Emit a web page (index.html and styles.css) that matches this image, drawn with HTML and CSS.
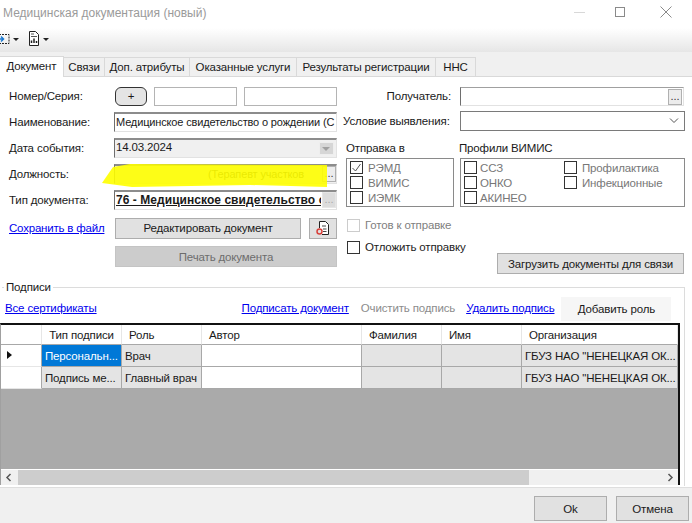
FILE: index.html
```html
<!DOCTYPE html>
<html lang="ru">
<head>
    <meta charset="UTF-8">
    <title>Медицинская документация (новый)</title>
    <link rel="stylesheet" href="styles.css">
</head>
<body>
    <div class="titlebar">
        <span class="title">Медицинская документация (новый)</span>
        <div class="win-btns">
            <span class="win-min"></span>
            <span class="win-max"></span>
            <svg class="win-close" width="12" height="12" viewBox="0 0 12 12"><path d="M.5.5l11 11M11.500.5l-11 11" stroke="#8a8a8a" fill="none"/></svg>
        </div>
    </div>

    <div class="toolbar">
        <svg class="tool-icon tool-first" width="12" height="14" viewBox="0 0 12 14"><path d="M1 2.500h10v9H1" fill="none" stroke="#222" stroke-dasharray="2 1"/><path d="M0 7h5M3 4.500L5.500 7 3 9.500" fill="none" stroke="#1a78d0" stroke-width="1.500"/></svg>
        <span class="caret"></span>
        <svg class="tool-icon" width="12" height="15" viewBox="0 0 12 15"><path d="M1.500.5h6l3 3v11h-9z" fill="#fff" stroke="#222"/><path d="M3 3h3M3 5.500h6" stroke="#555"/><path d="M3.500 12V9.500M6 12V7.500M8.500 12V10" stroke="#222" stroke-width="1.500"/></svg>
        <span class="caret"></span>
    </div>

    <div class="tabs">
        <span class="tab active">Документ</span>
        <span class="tab tab-2">Связи</span>
        <span class="tab tab-3">Доп. атрибуты</span>
        <span class="tab tab-4">Оказанные услуги</span>
        <span class="tab tab-5">Результаты регистрации</span>
        <span class="tab tab-6">ННС</span>
    </div>

    <div class="form">
        <div class="col-left">
            <div class="row">
                <label>Номер/Серия:</label>
                <button class="plus">+</button>
                <span class="input num-1"></span>
                <span class="input num-2"></span>
            </div>
            <div class="row">
                <label>Наименование:</label>
                <span class="input field sunken">Медицинское свидетельство о рождении (С</span>
            </div>
            <div class="row">
                <label>Дата события:</label>
                <span class="input field sunken gray date">14.03.2024<span class="date-btn"><i></i></span></span>
            </div>
            <div class="row">
                <label>Должность:</label>
                <span class="input field sunken gray post">(Терапевт участков<span class="dots">...</span></span>
                <svg class="marker" width="226" height="24" viewBox="0 0 226 24"><path d="M11 3L28 0l197 1v22l-77-2-118 2L0 19z" fill="#ffff00"/></svg>
            </div>
            <div class="row">
                <label>Тип документа:</label>
                <span class="input field sunken bold"><u class="clip">76 - Медицинское свидетельство о</u><span class="dots off">...</span></span>
            </div>
            <div class="row row-edit">
                <a class="link save-link">Сохранить в файл</a>
                <button class="btn edit-btn">Редактировать документ</button>
                <button class="btn icon-btn">
                    <svg width="16" height="16" viewBox="0 0 16 16"><path d="M4.500 8V1.500h6l3 3v10H7" fill="#fff" stroke="#222"/><path d="M7 6h4M8 9h3.500M8 11.500h3.500" stroke="#444"/><circle cx="4.500" cy="11.500" r="2.500" fill="none" stroke="#d8403a" stroke-width="1.500"/></svg>
                </button>
            </div>
            <button class="btn print-btn">Печать документа</button>
        </div>

        <div class="col-right">
            <div class="row">
                <label class="right-label">Получатель:</label>
                <span class="input recipient sunken-light"><span class="dots">...</span></span>
            </div>
            <div class="row row-cond">
                <label class="right-label">Условие выявления:</label>
                <span class="input select">
                    <svg width="10" height="6" viewBox="0 0 10 6"><path d="M1 .5l4 4 4-4" fill="none" stroke="#555"/></svg>
                </span>
            </div>
            <div class="send-head">
                <span class="send-col">Отправка в</span>
                <span>Профили ВИМИС</span>
            </div>
            <div class="send-boxes">
                <div class="box box-send">
                    <span class="chk-row"><span class="chk checked"><svg width="11" height="10" viewBox="0 0 11 10"><path d="M1.500 5l3 3 5-7" fill="none" stroke="#555"/></svg></span>РЭМД</span>
                    <span class="chk-row"><span class="chk"></span>ВИМИС</span>
                    <span class="chk-row"><span class="chk"></span>ИЭМК</span>
                </div>
                <div class="box box-profiles">
                    <span class="chk-row"><span class="chk"></span>ССЗ</span>
                    <span class="chk-row"><span class="chk"></span>Профилактика</span>
                    <span class="chk-row"><span class="chk"></span>ОНКО</span>
                    <span class="chk-row"><span class="chk"></span>Инфекционные</span>
                    <span class="chk-row"><span class="chk"></span>АКИНЕО</span>
                </div>
            </div>
            <div class="check-line ready"><span class="chk off"></span>Готов к отправке</div>
            <div class="check-line later"><span class="chk"></span>Отложить отправку</div>
            <button class="btn load-btn">Загрузить документы для связи</button>
        </div>
    </div>

    <div class="group">
        <div class="signs">
            <div class="signs-head"><span>Подписи</span></div>
            <div class="signs-links">
                <a class="link">Все сертификаты</a>
                <a class="link sign-link">Подписать документ</a>
                <span class="muted">Очистить подпись</span>
                <a class="link">Удалить подпись</a>
                <button class="add-role">Добавить роль</button>
            </div>
        </div>

        <div class="grid-wrap">
            <div class="grid">
                <div class="cell head"></div>
                <div class="cell head center">Тип подписи</div>
                <div class="cell head">Роль</div>
                <div class="cell head">Автор</div>
                <div class="cell head">Фамилия</div>
                <div class="cell head">Имя</div>
                <div class="cell head">Организация</div>

                <div class="cell mark"><i class="arrow"></i></div>
                <div class="cell selected">Персональн...</div>
                <div class="cell ro">Врач</div>
                <div class="cell"></div>
                <div class="cell ro"></div>
                <div class="cell ro"></div>
                <div class="cell ro">ГБУЗ НАО "НЕНЕЦКАЯ ОК...</div>

                <div class="cell mark"></div>
                <div class="cell ro">Подпись ме...</div>
                <div class="cell ro">Главный врач</div>
                <div class="cell"></div>
                <div class="cell ro"></div>
                <div class="cell ro"></div>
                <div class="cell ro">ГБУЗ НАО "НЕНЕЦКАЯ ОК...</div>
            </div>
            <div class="grid-empty"></div>
            <div class="hscroll">
                <svg width="8" height="9" viewBox="0 0 8 9"><path d="M5.500 1L2 4.500 5.500 8" fill="none" stroke="#555" stroke-width="1.500"/></svg>
                <span class="thumb"></span>
                <svg width="8" height="9" viewBox="0 0 8 9"><path d="M2.500 1L6 4.500 2.500 8" fill="none" stroke="#555" stroke-width="1.500"/></svg>
            </div>
        </div>
    </div>

    <div class="footer">
        <button class="btn foot-btn">Ok</button>
        <button class="btn foot-btn">Отмена</button>
    </div>
</body>
</html>
```

FILE: styles.css
```css
* {
    margin: 0;
    padding: 0;
    box-sizing: border-box;
}

html, body {
    height: 523px;
    overflow: hidden;
}

body {
    background-color: #ffffff;
    color: #1a1a1a;
    font-family: "Liberation Sans", Arial, sans-serif;
    font-size: 11.5px;
    letter-spacing: -0.15px;
    width: 692px;
    position: relative;
}

button {
    font-family: inherit;
    font-size: 11.5px;
    letter-spacing: -0.15px;
    color: inherit;
}

.titlebar {
    height: 28px;
    display: flex;
    align-items: center;
    justify-content: space-between;
    padding-left: 3px;
}

.title {
    color: #9a9a9a;
    font-size: 12px;
    letter-spacing: 0;
    margin-top: -2px;
}

.win-btns {
    display: flex;
    align-items: center;
    margin-right: 20px;
    margin-top: -4px;
}

.win-min {
    width: 11px;
    height: 1px;
    background-color: #d8d8d8;
}

.win-max {
    width: 10px;
    height: 10px;
    border: 1px solid #8a8a8a;
    margin-left: 30px;
}

.win-close {
    margin-left: 35px;
}

.toolbar {
    height: 24px;
    background: linear-gradient(#ffffff, #e6e6e6);
    display: flex;
    align-items: center;
    padding-bottom: 3px;
}

.tool-first {
    margin-left: -2px;
}

.caret {
    width: 0;
    height: 0;
    border-left: 3px solid transparent;
    border-right: 3px solid transparent;
    border-top: 3px solid #222;
    margin: 1px 9px 0 3px;
}

.tabs {
    height: 25px;
    display: flex;
    align-items: flex-end;
    border-bottom: 1px solid #d9d9d9;
    background-color: #f0f0f0;
    padding-top: 5px;
}

.tab {
    height: 19px;
    line-height: 18px;
    background-color: #f0f0f0;
    border: 1px solid #d9d9d9;
    border-left: none;
    border-bottom: none;
    text-align: center;
}

.tab.active {
    width: 64px;
    height: 21px;
    margin-top: -2px;
    background-color: #ffffff;
    position: relative;
    top: 1px;
}

.tab-2 { width: 41px; }
.tab-3 { width: 85px; }
.tab-4 { width: 107px; }
.tab-5 { width: 139px; }
.tab-6 { width: 40px; }

.form {
    display: flex;
    height: 205px;
    padding-top: 9px;
}

.col-left {
    width: 343px;
    padding-left: 9px;
}

.row {
    display: flex;
    align-items: center;
    height: 20px;
    margin-bottom: 6px;
    position: relative;
}

.row label {
    width: 106px;
    flex: none;
    white-space: nowrap;
}

.input {
    display: block;
    height: 19px;
    background-color: #ffffff;
    border: 1px solid #b4b4b4;
}

.num-1 {
    width: 83px;
    margin-left: 7px;
}

.num-2 {
    width: 93px;
    margin-left: 7px;
}

.plus {
    width: 32px;
    height: 19px;
    background-color: #e4e4e4;
    border: 1px solid #333333;
    border-radius: 6px;
}

.field {
    width: 223px;
    margin-left: -1px;
    position: relative;
    overflow: hidden;
    white-space: nowrap;
    line-height: 17px;
    height: 20px;
    padding-left: 1px;
    font-size: 11px;
}

.sunken {
    border-color: #8c8c8c #e2e2e2 #e2e2e2 #6e6e6e;
    border-width: 2px 1px 1px 1px;
}

.sunken-light {
    border-color: #a0a0a0 #e2e2e2 #e2e2e2 #6e6e6e;
    border-width: 1px;
    position: relative;
}

.gray {
    background-color: #f0f0f0;
}

.post {
    padding-left: 93px;
}

.bold {
    font-weight: bold;
    font-size: 12px;
    letter-spacing: 0.05px;
}

.clip {
    display: block;
    width: 205px;
    overflow: hidden;
}

.date {
    line-height: 15px;
    font-size: 11.5px;
}

.date-btn {
    position: absolute;
    right: 2px;
    top: 2px;
    width: 15px;
    height: 13px;
    background-color: #d6d6d6;
    border: 1px solid #eeeeee;
}

.date-btn i {
    position: absolute;
    left: 2px;
    top: 4px;
    border-left: 4px solid transparent;
    border-right: 4px solid transparent;
    border-top: 4px solid #a0a0a0;
}

.dots {
    position: absolute;
    right: 0;
    top: 0;
    width: 14px;
    height: 16px;
    background-color: #ececec;
    border: 1px solid #b0b0b0;
    font-weight: normal;
    line-height: 12px;
    text-align: center;
    letter-spacing: 0;
    font-size: 11px;
    color: #333333;
}

.recipient .dots {
    top: 1px;
    right: 1px;
}

.dots.off {
    color: #aaaaaa;
    background-color: #dcdcdc;
    border-color: #e6e6e6;
}

/* жёлтый маркер поверх поля */
.marker {
    position: absolute;
    left: 93px;
    top: 0;
    opacity: 0.9;
}

.row-edit {
    height: 22px;
    margin-top: 7px;
    margin-bottom: 7px;
}

.save-link {
    width: 106px;
    flex: none;
    margin-top: -1px;
    letter-spacing: -0.2px;
}

.link {
    color: #0000ee;
    text-decoration: underline;
    white-space: nowrap;
}

.btn {
    background-color: #e1e1e1;
    border: 1px solid #adadad;
}

.edit-btn {
    width: 186px;
    height: 21px;
}

.icon-btn {
    width: 28px;
    height: 21px;
    margin-left: 8px;
    display: flex;
    align-items: center;
    justify-content: center;
}

.print-btn {
    display: block;
    width: 222px;
    height: 21px;
    margin-left: 106px;
    background-color: #cccccc;
    border-color: #c4c4c4;
    color: #6d6d6d;
}

.col-right {
    flex: 1;
}

.right-label {
    text-align: right;
}

.col-right .row label {
    width: 108px;
    margin-right: 9px;
}

.row-cond {
    margin-top: -1px;
    margin-bottom: 0;
}

.col-right .row-cond .right-label {
    width: 105px;
    margin-right: 12px;
}

.recipient {
    width: 224px;
}

.select {
    width: 225px;
    height: 20px;
    border-color: #7a7a7a;
    display: flex;
    align-items: center;
    justify-content: flex-end;
    padding-right: 5px;
}

.send-head {
    display: flex;
    margin-top: 10px;
    padding-left: 3px;
    height: 17px;
    line-height: 14px;
}

.send-col {
    width: 113px;
}

.send-boxes {
    display: flex;
    padding-left: 3px;
}

.box {
    height: 49px;
    border: 1px solid #8a8a8a;
    color: #777777;
    padding: 1px 3px;
}

.box-send {
    width: 108px;
    margin-right: 6px;
}

.box-profiles {
    width: 225px;
    display: grid;
    grid-template-columns: 100px 1fr;
}

.chk-row {
    display: flex;
    align-items: center;
    height: 15px;
}

.chk {
    display: flex;
    align-items: center;
    justify-content: center;
    width: 13px;
    height: 13px;
    flex: none;
    background-color: #ffffff;
    border: 1px solid #333333;
    margin-right: 5px;
}

.box-profiles .chk-row:nth-child(odd) .chk {
    margin-right: 3px;
}

.chk.off {
    border-color: #cccccc;
}

.check-line {
    display: flex;
    align-items: center;
    height: 14px;
    margin-left: 4px;
}

.ready {
    margin-top: 11px;
    color: #808080;
}

.later {
    margin-top: 8px;
    color: #222222;
}

.load-btn {
    display: block;
    width: 187px;
    height: 21px;
    margin-left: 154px;
    margin-top: -1px;
}

.group {
    width: 685px;
    height: 199px;
    margin-top: 5px;
    padding-left: 2px;
    border-right: 1px solid #dcdcdc;
}

.signs {
    height: 36px;
}

.signs-head {
    height: 14px;
    position: relative;
    border-top: 1px solid #dcdcdc;
}

.signs-head span {
    position: absolute;
    left: 2px;
    top: -7px;
    background-color: #ffffff;
    padding: 0 2px;
}

.signs-links {
    display: flex;
    align-items: center;
    height: 24px;
    padding-left: 3px;
    margin-top: -5px;
}

.sign-link {
    margin-left: 145px;
}

.muted {
    color: #8c8c8c;
    margin: 0 11px 0 12px;
    white-space: nowrap;
}

.add-role {
    width: 110px;
    height: 24px;
    margin-left: 7px;
    margin-top: 2px;
    background-color: #f6f6f6;
    border: none;
}

.grid-wrap {
    width: 680px;
    margin-left: -2px;
    height: 162px;
    border-top: 2px solid #111111;
    border-right: 2px solid #111111;
    border-left: 1px solid #a0a0a0;
    display: flex;
    flex-direction: column;
}

.grid {
    display: grid;
    grid-template-columns: 41px 80px 80px 160px 80px 80px 156px;
    grid-template-rows: 20px 22px 22px;
    background-color: #ffffff;
    flex: none;
}

.cell {
    border-right: 1px solid #a8a8a8;
    border-bottom: 1px solid #a8a8a8;
    line-height: 22px;
    padding-left: 3px;
    white-space: nowrap;
    overflow: hidden;
}

.head {
    padding-left: 7px;
    line-height: 21px;
    border-right-color: #e6e6e6;
}

.center {
    text-align: center;
    padding-left: 0;
}

.mark {
    border-right-color: #a8a8a8;
    border-bottom-color: #e6e6e6;
    position: relative;
}

.arrow {
    position: absolute;
    left: 6px;
    top: 6px;
    border-top: 4px solid transparent;
    border-bottom: 4px solid transparent;
    border-left: 5px solid #111111;
}

.selected {
    background-color: #0078d7;
    color: #ffffff;
}

.ro {
    background-color: #e4e4e4;
}

.grid-empty {
    flex: 1;
    background-color: #aaaaaa;
}

.hscroll {
    height: 16px;
    flex: none;
    background-color: #f0f0f0;
    border-top: 1px solid #ffffff;
    display: flex;
    align-items: center;
    justify-content: space-between;
    padding: 0 4px;
    position: relative;
}

.thumb {
    position: absolute;
    left: 17px;
    top: 0;
    bottom: 0;
    width: 511px;
    background-color: #cdcdcd;
}

.footer {
    position: absolute;
    left: 0;
    right: 0;
    bottom: 0;
    height: 36px;
    background-color: #f0f0f0;
    border-top: 1px solid #dedede;
    display: flex;
    justify-content: flex-end;
    align-items: flex-start;
    gap: 9px;
    padding: 8px 3px 0 0;
}

.foot-btn {
    width: 73px;
    height: 25px;
    background-color: #e1e1e1;
}
```
